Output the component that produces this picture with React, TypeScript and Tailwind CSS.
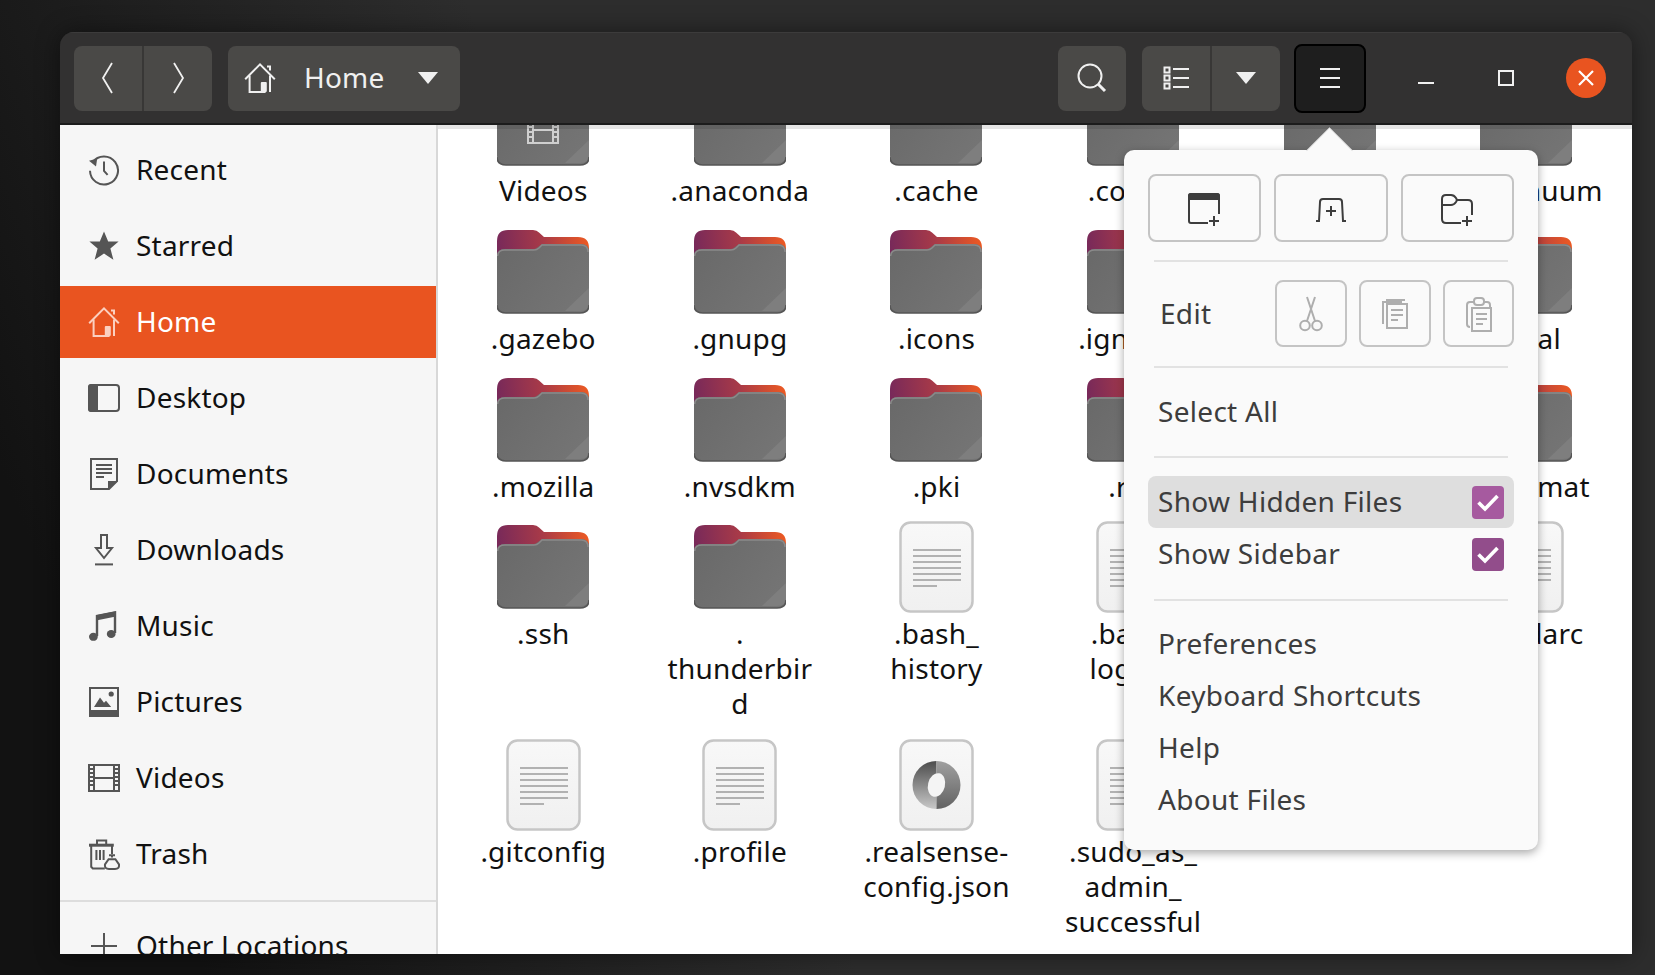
import React from 'react';

type IconProps = { className?: string };

const Icon16: React.FC<IconProps & { children: React.ReactNode }> = ({ className, children }) => (
  <svg viewBox="0 0 16 16" fill="none" stroke="currentColor" strokeWidth="1" className={className}>
    {children}
  </svg>
);

const HomeIcon: React.FC<IconProps> = ({ className }) => (
  <Icon16 className={className}>
    <path d="M.6 8.6 8 1.2l7.4 7.4" />
    <path d="M2.8 6.8v8.2h8M13 6.8V15" />
    <path d="M11.5 2.2h1.5v2" />
    <rect x="8.4" y="10" width="3" height="5" rx=".5" fill="currentColor" stroke="none" />
  </Icon16>
);

const RecentIcon: React.FC<IconProps> = ({ className }) => (
  <Icon16 className={className}>
    <path d="M2.3 4.2A7 7 0 1 1 1 8.4" />
    <path d="M.5 3.4 4.6 2.2 4 6.2Z" fill="currentColor" stroke="none" />
    <path d="M8 3.8v4.6l1.8 2" />
  </Icon16>
);

const StarIcon: React.FC<IconProps> = ({ className }) => (
  <Icon16 className={className}>
    <path d="M8 .8l2.1 5h5.2l-4.1 3.5 1.5 5.6L8 11.8l-4.7 3.1 1.5-5.6L.7 5.8h5.2Z" fill="currentColor" stroke="none" />
  </Icon16>
);

const DesktopIcon: React.FC<IconProps> = ({ className }) => (
  <Icon16 className={className}>
    <rect x=".5" y="1.5" width="15" height="13" rx="1.5" />
    <path d="M1.5 1.5H4.5V14.5H1.5Q.5 14.5.5 13.5V2.5Q.5 1.5 1.5 1.5Z" fill="currentColor" />
  </Icon16>
);

const DocumentsIcon: React.FC<IconProps> = ({ className }) => (
  <Icon16 className={className}>
    <path d="M1.5.5h13v11l-4 4h-9Z" />
    <path d="M10 15.5v-4h5Z" fill="currentColor" stroke="none" />
    <path d="M4 3.5h8M4 5.5h8M4 7.5h8M4 9.5h4" />
  </Icon16>
);

const DownloadsIcon: React.FC<IconProps> = ({ className }) => (
  <Icon16 className={className}>
    <path d="M6.5.5h3v6.5h2.5L8 12 4 7h2.5Z" />
    <path d="M3.5 15.2h9" />
  </Icon16>
);

const MusicIcon: React.FC<IconProps> = ({ className }) => (
  <Icon16 className={className}>
    <path d="M4.5 13V3l9-1.8V11.5" strokeWidth="1.2" />
    <path d="M4.5 3v1.6l9-1.8V1.2Z" fill="currentColor" />
    <ellipse cx="2.7" cy="13.4" rx="2.2" ry="2" fill="currentColor" stroke="none" />
    <ellipse cx="11.6" cy="12" rx="2.2" ry="2" fill="currentColor" stroke="none" />
  </Icon16>
);

const PicturesIcon: React.FC<IconProps> = ({ className }) => (
  <Icon16 className={className}>
    <rect x="1" y="1" width="14" height="14" />
    <path d="M1 12h14v3H1Z" fill="currentColor" stroke="none" />
    <path d="M3 10.5 6 5.8l2 2.6 1-1 2.6 3.1Z" fill="currentColor" stroke="none" />
    <circle cx="11.6" cy="4" r="1.3" fill="currentColor" stroke="none" />
  </Icon16>
);

const VideosIcon: React.FC<IconProps> = ({ className }) => (
  <Icon16 className={className}>
    <path d="M.5 1.5h15v13H.5ZM3 1.5v13M13 1.5v13M3 8h10" />
    <path d="M.5 3.5H3M.5 5.5H3M.5 7.5H3M.5 9.5H3M.5 11.5H3M13 3.5h2.5M13 5.5h2.5M13 7.5h2.5M13 9.5h2.5M13 11.5h2.5" />
  </Icon16>
);

const TrashIcon: React.FC<IconProps> = ({ className }) => (
  <Icon16 className={className}>
    <path d="M.5 3.6h12.4" strokeWidth="1.5" />
    <path d="M4.5 3V1.2h4.6V3" />
    <path d="M1.6 4v10.4l.8.8h6M12 4v4" />
    <path d="M4.2 6v5M6 6v5M7.8 6v5" />
    <path d="M10.5 8.6h3M12 8.8v1" />
    <path d="M10.3 10.6h3.4l1.8 2.6q.3 2.3-2 2.3h-3q-2.3 0-2-2.3Z" />
  </Icon16>
);

const PlusIcon: React.FC<IconProps> = ({ className }) => (
  <Icon16 className={className}>
    <path d="M8 1.5v13M1.5 8h13" />
  </Icon16>
);

const CaretDown: React.FC = () => (
  <svg viewBox="0 0 20 12" className="w-[20px] h-[12px]">
    <path d="M0 0h20L10 12Z" fill="#f0f0f0" />
  </svg>
);

const FolderIcon: React.FC<{ film?: boolean }> = ({ film }) => (
  <svg viewBox="0 0 92 84" className="w-[92px] h-[84px]">
    <defs>
      <linearGradient id="folderTab" x1="0" y1="20" x2="92" y2="10" gradientUnits="userSpaceOnUse">
        <stop offset="0" stopColor="#77295a" />
        <stop offset="0.5" stopColor="#a83a48" />
        <stop offset="1" stopColor="#ed5a22" />
      </linearGradient>
      <linearGradient id="folderBody" x1="0" y1="20" x2="92" y2="84" gradientUnits="userSpaceOnUse">
        <stop offset="0" stopColor="#696969" />
        <stop offset="1" stopColor="#767676" />
      </linearGradient>
    </defs>
    <path d="M0 36V11Q0 0 11 0H36Q40 0 42 2.5L47 7H81Q92 7 92 18V36Z" fill="url(#folderTab)" />
    <path d="M0 26Q0 19 8 19H37Q39 19 41 17L45 14H84Q92 14 92 22V74Q92 83 83 83H9Q0 83 0 74Z" fill="url(#folderBody)" />
    <path d="M.7 26Q.7 20 8 20H37Q40 20 42 18L45 15H84Q91 15 91 22" fill="none" stroke="#8a8a8a" strokeWidth="1.5" />
    <path d="M92 58V74Q92 81 83 81H68Z" fill="#7e7e7e" />
    <path d="M0 75Q0 83 9 83H83Q92 83 92 75" fill="none" stroke="#555" strokeWidth="1.6" />
    {film && (
      <g fill="none" stroke="#cfcfcf" strokeWidth="2">
        <path d="M31 35h30v26H31ZM36 35v26M56 35v26M36 48h20" />
        <path d="M31 40h5M31 45h5M31 50h5M31 55h5M56 40h5M56 45h5M56 50h5M56 55h5" />
      </g>
    )}
  </svg>
);

const DocShell: React.FC<{ children: React.ReactNode }> = ({ children }) => (
  <svg viewBox="0 0 75 92" className="w-[75px] h-[92px]">
    <defs>
      <linearGradient id="docBody" x1="0" y1="0" x2="0" y2="1">
        <stop offset="0" stopColor="#f8f8f8" />
        <stop offset="1" stopColor="#f0f0f0" />
      </linearGradient>
    </defs>
    <rect x="1.5" y="1.5" width="72" height="89" rx="10" fill="url(#docBody)" stroke="#c6c6c6" strokeWidth="2.5" />
    {children}
  </svg>
);

const TextFileIcon: React.FC = () => (
  <DocShell>
    <path
      d="M14 29h48M14 35h48M14 41h48M14 47h48M14 53h48M14 59h48M14 65h24"
      stroke="#9c9c9c"
      strokeWidth="1.6"
      fill="none"
    />
  </DocShell>
);

const JsonFileIcon: React.FC = () => (
  <DocShell>
    <defs>
      <linearGradient id="jsonLeft" x1="0" y1="0" x2="0" y2="1">
        <stop offset="0" stopColor="#4c4c4c" />
        <stop offset="1" stopColor="#c8c8c8" />
      </linearGradient>
      <linearGradient id="jsonRight" x1="0" y1="0" x2="0" y2="1">
        <stop offset="0" stopColor="#a0a0a0" />
        <stop offset="1" stopColor="#626262" />
      </linearGradient>
    </defs>
    <path d="M37.5 22a24 24 0 0 0 0 48Z" fill="url(#jsonLeft)" />
    <path d="M37.5 22a24 24 0 0 1 0 48Z" fill="url(#jsonRight)" />
    <ellipse cx="37.5" cy="46" rx="8.5" ry="12" transform="rotate(14 37.5 46)" fill="#f4f4f4" />
  </DocShell>
);

type FileEntry = { name: string; kind: 'folder' | 'film' | 'text' | 'json' };

const files: FileEntry[] = [
  { name: 'Videos', kind: 'film' },
  { name: '.anaconda', kind: 'folder' },
  { name: '.cache', kind: 'folder' },
  { name: '.config', kind: 'folder' },
  { name: '.dotnet', kind: 'folder' },
  { name: '.continuum', kind: 'folder' },
  { name: '.gazebo', kind: 'folder' },
  { name: '.gnupg', kind: 'folder' },
  { name: '.icons', kind: 'folder' },
  { name: '.ignition', kind: 'folder' },
  { name: '.java', kind: 'folder' },
  { name: '.local', kind: 'folder' },
  { name: '.mozilla', kind: 'folder' },
  { name: '.nvsdkm', kind: 'folder' },
  { name: '.pki', kind: 'folder' },
  { name: '.ros', kind: 'folder' },
  { name: '.sdformat', kind: 'folder' },
  { name: '.ycformat', kind: 'folder' },
  { name: '.ssh', kind: 'folder' },
  { name: '.\nthunderbir\nd', kind: 'folder' },
  { name: '.bash_\nhistory', kind: 'text' },
  { name: '.bash_\nlogout', kind: 'text' },
  { name: '.bashrc', kind: 'text' },
  { name: '.condarc', kind: 'text' },
  { name: '.gitconfig', kind: 'text' },
  { name: '.profile', kind: 'text' },
  { name: '.realsense-\nconfig.json', kind: 'json' },
  { name: '.sudo_as_\nadmin_\nsuccessful', kind: 'text' },
];

const places = [
  { name: 'Recent', Icon: RecentIcon },
  { name: 'Starred', Icon: StarIcon },
  { name: 'Home', Icon: HomeIcon, active: true },
  { name: 'Desktop', Icon: DesktopIcon },
  { name: 'Documents', Icon: DocumentsIcon },
  { name: 'Downloads', Icon: DownloadsIcon },
  { name: 'Music', Icon: MusicIcon },
  { name: 'Pictures', Icon: PicturesIcon },
  { name: 'Videos', Icon: VideosIcon },
  { name: 'Trash', Icon: TrashIcon },
];

const FileItem: React.FC<{ file: FileEntry }> = ({ file }) => (
  <div className="flex flex-col items-center">
    <div className="h-[96px] flex items-center justify-center">
      {file.kind === 'folder' && <FolderIcon />}
      {file.kind === 'film' && <FolderIcon film />}
      {file.kind === 'text' && <TextFileIcon />}
      {file.kind === 'json' && <JsonFileIcon />}
    </div>
    <div className="mt-[1px] pb-[2px] text-[28px] tracking-[0.2px] leading-[35px] text-center text-[#111] whitespace-pre-line">{file.name}</div>
  </div>
);

const MenuRow: React.FC<{ label: string; checked?: boolean; hover?: boolean }> = ({ label, checked, hover }) => (
  <div className={`h-[52px] flex items-center justify-between pl-[10px] pr-[10px] rounded-[8px] ${hover ? 'bg-[#dedede]' : ''}`}>
    <span className="text-[28px] tracking-[0.3px] text-[#3d3d3d] -mt-[3px]">{label}</span>
    {checked && (
      <span className={`w-[32px] h-[33px] rounded-[4px] flex items-center justify-center ${hover ? 'bg-[#a65a9f]' : 'bg-[#924d8b]'}`}>
        <svg viewBox="0 0 24 24" className="w-[24px] h-[24px]" fill="none" stroke="#fff" strokeWidth="3.6">
          <path d="M2.5 12.5 9 19 21.5 6" />
        </svg>
      </span>
    )}
  </div>
);

const MenuSeparator: React.FC<{ className?: string }> = ({ className }) => (
  <div className={`h-[2px] mx-[6px] bg-[#e2e2e2] ${className ?? ''}`} />
);

const ActionButton: React.FC<{ className: string; children: React.ReactNode }> = ({ className, children }) => (
  <div className={`rounded-[8px] border-2 border-[#c4c4c4] flex items-center justify-center ${className}`}>{children}</div>
);

const Popover: React.FC = () => (
  <div className="absolute left-[1064px] top-[118px] w-[414px] px-[24px] py-[24px] bg-[#fafafa] rounded-[10px] shadow-[0_3px_10px_rgba(0,0,0,0.35)] z-10">
    <div className="absolute left-[189px] -top-[16px] w-[33px] h-[33px] rotate-45 bg-[#fafafa] border-l border-t border-black/10" />
    <div className="relative flex justify-between">
      <ActionButton className="w-[113px] h-[68px] bg-[#fafafa] pt-[3px]">
        <svg viewBox="0 0 34 34" className="w-[34px] h-[34px] text-[#3d3d3d]" fill="none" stroke="currentColor" strokeWidth="2">
          <path d="M20 30H3Q1 30 1 28V3Q1 1 3 1H29Q31 1 31 3V21" />
          <path d="M1 6V3Q1 1 3 1H29Q31 1 31 3V6Z" fill="currentColor" />
          <path d="M26 23v10M21 28h10" />
        </svg>
      </ActionButton>
      <ActionButton className="w-[114px] h-[68px] pt-[3px]">
        <svg viewBox="0 0 32 24" className="w-[32px] h-[24px] text-[#3d3d3d]" fill="none" stroke="currentColor" strokeWidth="2">
          <path d="M1 23H4L5 4Q5 1 8 1H24Q27 1 27 4L28 23H31" />
          <path d="M16 8v10M11 13h10" />
        </svg>
      </ActionButton>
      <ActionButton className="w-[113px] h-[68px] pt-[3px]">
        <svg viewBox="0 0 34 32" className="w-[34px] h-[32px] text-[#3d3d3d]" fill="none" stroke="currentColor" strokeWidth="2">
          <path d="M20 29H5Q1 29 1 25V5Q1 1 5 1H10Q13 1 15 4L16 6H27Q31 6 31 10V21" />
          <path d="M1 11H10Q13 11 15 8L16 6" />
          <path d="M26 22v10M21 27h10" />
        </svg>
      </ActionButton>
    </div>
    <MenuSeparator className="mt-[18px]" />
    <div className="flex items-center mt-[18px] h-[67px]">
      <span className="flex-1 pl-[12px] text-[28px] tracking-[0.3px] text-[#3d3d3d] -mt-[1px]">Edit</span>
      <div className="flex gap-[12px]">
        <ActionButton className="w-[72px] h-[67px]">
          <svg viewBox="0 0 24 36" className="w-[24px] h-[36px]" fill="none" stroke="#aeaeae" strokeWidth="2">
            <path d="M8 1l8 24M16 1 8 25" />
            <circle cx="6" cy="29.5" r="4.8" />
            <circle cx="18" cy="29.5" r="4.8" />
          </svg>
        </ActionButton>
        <ActionButton className="w-[72px] h-[67px]">
          <svg viewBox="0 0 26 30" className="w-[26px] h-[30px]" fill="none" stroke="#aeaeae" strokeWidth="2">
            <path d="M1 25V3H20" />
            <path d="M4 1H23M5 28V5H25V29H5Z" />
            <path d="M9 11H21M9 16H21M9 21H16" />
          </svg>
        </ActionButton>
        <ActionButton className="w-[71px] h-[67px]">
          <svg viewBox="0 0 26 36" className="w-[26px] h-[36px]" fill="none" stroke="#aeaeae" strokeWidth="2">
            <path d="M4 31Q1 31 1 28V9Q1 6 4 6H8M18 6H21Q24 6 24 9V12" />
            <rect x="8" y="2" width="10" height="7" rx="3" />
            <path d="M6 12H25V35H6Z" />
            <path d="M10 18H21M10 23H21M10 28H17" />
          </svg>
        </ActionButton>
      </div>
    </div>
    <MenuSeparator className="mt-[19px]" />
    <div className="mt-[18px] mb-[18px]">
      <MenuRow label="Select All" />
    </div>
    <MenuSeparator />
    <div className="mt-[18px] mb-[19px]">
      <MenuRow label="Show Hidden Files" checked hover />
      <MenuRow label="Show Sidebar" checked />
    </div>
    <MenuSeparator />
    <div className="mt-[17px]">
      <MenuRow label="Preferences" />
      <MenuRow label="Keyboard Shortcuts" />
      <MenuRow label="Help" />
      <MenuRow label="About Files" />
    </div>
  </div>
);

const Header: React.FC = () => (
  <div className="h-[93px] shrink-0 flex items-center bg-[#323131] border-t border-t-[#3c3b3b] border-b-2 border-b-[#1c1c1c] pl-[14px] pr-[7px] text-[#f0f0f0]">
    <div className="flex w-[138px] h-[65px] rounded-[8px] bg-[#4a4947]">
      <div className="flex-1 flex items-center justify-center border-r-2 border-[#383736] pr-[2px]">
        <svg viewBox="0 0 12 32" className="w-[12px] h-[32px]" fill="none" stroke="currentColor" strokeWidth="1.8">
          <path d="M11 1 2 16l9 15" />
        </svg>
      </div>
      <div className="flex-1 flex items-center justify-center pl-[2px]">
        <svg viewBox="0 0 12 32" className="w-[12px] h-[32px]" fill="none" stroke="currentColor" strokeWidth="1.8">
          <path d="M1 1l9 15-9 15" />
        </svg>
      </div>
    </div>
    <div className="ml-[16px] flex items-center w-[232px] h-[65px] rounded-[8px] bg-[#4a4947] pl-[16px]">
      <HomeIcon className="w-[32px] h-[32px]" />
      <span className="ml-[28px] text-[28px] tracking-[0.2px] -mt-[3px]">Home</span>
      <div className="ml-[34px]">
        <CaretDown />
      </div>
    </div>
    <div className="flex-1" />
    <div className="w-[68px] h-[65px] rounded-[8px] bg-[#4a4947] flex items-center justify-center">
      <svg viewBox="0 0 30 30" className="w-[30px] h-[30px]" fill="none" stroke="currentColor" strokeWidth="2">
        <circle cx="13" cy="13" r="11.5" />
        <path d="M21 21l7 7" strokeWidth="3" />
      </svg>
    </div>
    <div className="ml-[16px] flex w-[138px] h-[65px] rounded-[8px] bg-[#4a4947]">
      <div className="w-[70px] flex items-center justify-center border-r-2 border-[#383736]">
        <svg viewBox="0 0 26 24" className="w-[26px] h-[24px]" fill="none" stroke="currentColor" strokeWidth="2">
          <path d="M1.5 1.5h5v5h-5ZM1.5 9.5h5v5h-5ZM1.5 17.5h5v5h-5Z" />
          <path d="M10 3h16M10 12h16M10 21h16" />
        </svg>
      </div>
      <div className="flex-1 flex items-center justify-center">
        <CaretDown />
      </div>
    </div>
    <div className="ml-[14px] w-[72px] h-[69px] rounded-[8px] bg-[#1e1e1e] border-2 border-black flex items-center justify-center">
      <svg viewBox="0 0 22 22" className="w-[22px] h-[22px]" fill="none" stroke="currentColor" strokeWidth="2">
        <path d="M1 2h20M1 11h20M1 20h20" />
      </svg>
    </div>
    <div className="ml-[20px] w-[80px] flex items-center justify-center">
      <div className="w-[16px] h-[2px] mt-[10px] bg-current" />
    </div>
    <div className="w-[80px] flex items-center justify-center">
      <div className="w-[16px] h-[16px] border-2 border-current" />
    </div>
    <div className="w-[79px] flex items-center justify-center">
      <div className="w-[40px] h-[40px] rounded-full bg-[#e95420] flex items-center justify-center">
        <svg viewBox="0 0 16 16" className="w-[16px] h-[16px]" fill="none" stroke="#fff" strokeWidth="2.2">
          <path d="M1 1l14 14M15 1 1 15" />
        </svg>
      </div>
    </div>
  </div>
);

const Sidebar: React.FC = () => (
  <div className="w-[378px] shrink-0 bg-[#f6f6f6] border-r-2 border-[#d8d8d8] pt-[9px] overflow-hidden">
    <div className="flex flex-col gap-[4px]">
      {places.map(({ name, Icon, active }) => (
        <div
          key={name}
          className={`h-[72px] flex items-center gap-[16px] pl-[28px] ${active ? 'bg-[#e95420] text-white' : 'text-[#111]'}`}
        >
          <Icon className={`w-[32px] h-[32px] ${active ? 'text-[#fbd0c0]' : 'text-[#555]'}`} />
          <span className="text-[28px] tracking-[0.2px] -mt-[3px]">{name}</span>
        </div>
      ))}
    </div>
    <div className="h-[2px] mt-[10px] bg-[#dddddd]" />
    <div className="mt-[8px] h-[72px] flex items-center gap-[16px] pl-[28px] text-[#111]">
      <PlusIcon className="w-[32px] h-[32px] text-[#555]" />
      <span className="text-[28px] tracking-[0.2px] -mt-[3px]">Other Locations</span>
    </div>
  </div>
);

const App: React.FC = () => {
  return (
    <div
      className="w-full h-screen overflow-hidden pt-[32px] pl-[60px] pr-[23px] pb-[21px] bg-[linear-gradient(68deg,#121212_10%,#2d2d2d_42%)]"
      style={{ fontFamily: '"Noto Sans", sans-serif' }}
    >
      <div className="relative h-full flex flex-col rounded-t-[14px] shadow-[0_0_24px_rgba(0,0,0,0.45)]">
        <div className="flex flex-col h-full rounded-t-[14px] overflow-hidden">
          <Header />
          <div className="flex-1 flex min-h-0">
            <Sidebar />
            <div className="relative flex-1 bg-white overflow-hidden">
              <div className="absolute top-0 left-0 right-0 h-[4px] bg-black/10" />
              <div className="-mt-[49px] pl-[7px] grid grid-cols-[repeat(6,196.6px)] gap-y-[13.8px]">
                {files.map((file) => (
                  <FileItem key={file.name} file={file} />
                ))}
              </div>
            </div>
          </div>
        </div>
        <Popover />
      </div>
    </div>
  );
};

export default App;
